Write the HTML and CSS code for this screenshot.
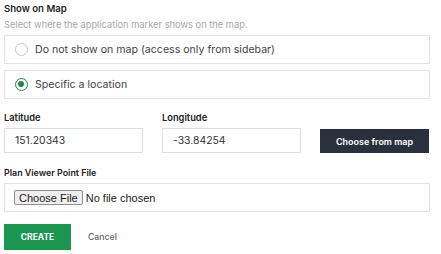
FILE: index.html
```html
<!DOCTYPE html>
<html>
<head>
<meta charset="utf-8">
<link rel="stylesheet" href="styles.css">
</head>
<body>
<div class="form">
  <div class="title">Show on Map</div>
  <div class="hint">Select where the application marker shows on the map.</div>
  <div class="options">
    <label class="option"><span class="radio"></span><span>Do not show on map (access only from sidebar)</span></label>
    <label class="option"><span class="radio checked"></span><span>Specific a location</span></label>
  </div>
  <div class="coords">
    <div class="field">
      <div class="label">Latitude</div>
      <div class="input">151.20343</div>
    </div>
    <div class="field">
      <div class="label">Longitude</div>
      <div class="input">-33.84254</div>
    </div>
    <button class="map-btn">Choose from map</button>
  </div>
  <div class="label file-label">Plan Viewer Point File</div>
  <div class="filebox"><span class="choose">Choose File</span><span class="nofile">No file chosen</span></div>
  <div class="actions">
    <button class="create">CREATE</button>
    <span class="cancel">Cancel</span>
  </div>
</div>
</body>
</html>
```
FILE: styles.css
```css
* { box-sizing: border-box; }
html, body { margin: 0; background: #fff; }
body { font-family: Inter, "Liberation Sans", sans-serif; color: #222; }
.form { padding: 3px 11px 0 4px; display: flex; flex-direction: column; }
.title { font-size: 9.6px; font-weight: 600; line-height: 12px; height: 12px; color: #1f1f1f; }
.hint { font-size: 9.3px; color: #a8a8a8; line-height: 12px; margin-top: 4px; height: 12px; }
.options { display: flex; flex-direction: column; gap: 6px; margin-top: 4px; }
.option { display: flex; align-items: center; height: 29px; border: 1px solid #e3e3e3; padding-left: 10px; font-size: 10.6px; color: #444; gap: 7px; }
.radio { width: 13px; height: 13px; border-radius: 50%; border: 1px solid #c8c8c8; background: #fff; position: relative; flex: none; }
.radio.checked { border: 1.5px solid #1a8a4c; }
.radio.checked::after { content: ""; position: absolute; left: 2px; top: 2px; width: 6px; height: 6px; border-radius: 50%; background: #1a8a4c; }
.coords { display: flex; align-items: flex-end; margin-top: 13px; gap: 19px; }
.field { display: flex; flex-direction: column; width: 139px; }
.label { font-size: 9.3px; font-weight: 600; color: #222; line-height: 12px; height: 12px; }
.input { margin-top: 4px; height: 25px; border: 1px solid #dedede; font-size: 10.4px; color: #333; padding-left: 10px; display: flex; align-items: center; }
.map-btn { width: 109px; height: 24px; margin-bottom: 0; background: #2a313d; color: #fff; border: 0; font-family: inherit; font-size: 9px; font-weight: 600; padding: 0; }
.file-label { margin-top: 14px; font-size: 8.9px; }
.filebox { margin-top: 4px; height: 29px; border: 1px solid #e3e3e3; display: flex; align-items: center; padding-left: 9px; font-family: "Liberation Sans", Arial, sans-serif; font-size: 11px; color: #222; }
.choose { border: 1px solid #8f8f8f; background: #efefef; border-radius: 2px; height: 15px; padding: 0 4px; display: flex; align-items: center; margin-right: 3px; }
.actions { display: flex; align-items: center; margin-top: 12px; gap: 17px; }
.create { width: 67px; height: 26px; background: #1a9650; color: #fff; border: 0; font-family: inherit; font-size: 8.5px; font-weight: 700; padding: 0; }
.cancel { font-size: 8.7px; font-weight: 500; color: #666; }
```
